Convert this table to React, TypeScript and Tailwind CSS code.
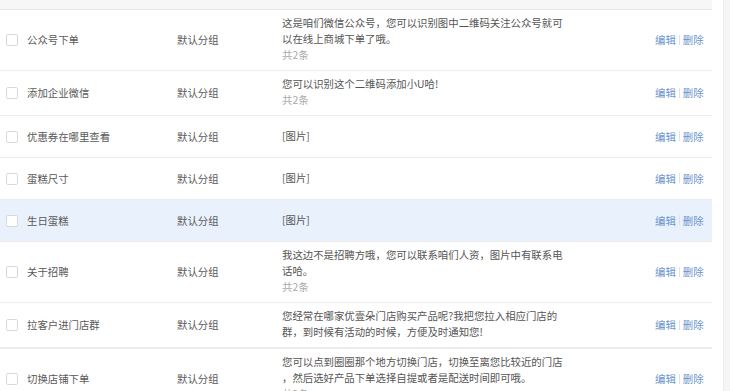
import React from "react"

type Row = {
  name: string
  group: string
  lines: string[]
  count?: string
  active?: boolean
  thick?: boolean
}

const rows: Row[] = [
  {
    name: "公众号下单",
    group: "默认分组",
    lines: ["这是咱们微信公众号，您可以识别图中二维码关注公众号就可", "以在线上商城下单了哦。"],
    count: "共2条",
  },
  {
    name: "添加企业微信",
    group: "默认分组",
    lines: ["您可以识别这个二维码添加小U哈!"],
    count: "共2条",
  },
  { name: "优惠券在哪里查看", group: "默认分组", lines: ["[图片]"] },
  { name: "蛋糕尺寸", group: "默认分组", lines: ["[图片]"] },
  { name: "生日蛋糕", group: "默认分组", lines: ["[图片]"], active: true },
  {
    name: "关于招聘",
    group: "默认分组",
    lines: ["我这边不是招聘方哦，您可以联系咱们人资，图片中有联系电", "话哈。"],
    count: "共2条",
  },
  {
    name: "拉客户进门店群",
    group: "默认分组",
    lines: ["您经常在哪家优壹朵门店购买产品呢?我把您拉入相应门店的", "群，到时候有活动的时候，方便及时通知您!"],
    thick: true,
  },
  {
    name: "切换店铺下单",
    group: "默认分组",
    lines: ["您可以点到圈圈那个地方切换门店，切换至离您比较近的门店", "，然后选好产品下单选择自提或者是配送时间即可哦。"],
    count: "共2条",
  },
]

function Checkbox() {
  return <span className="block w-[12px] h-[12px] border border-[#d9d9d9] rounded-[2px] bg-white" />
}

function TableRow({ row }: { row: Row }) {
  return (
    <div
      className={`flex items-center min-h-[42px] border-[#ececec] ${row.thick ? "border-b-2" : "border-b"} ${
        row.active ? "bg-[#e9f1fd]" : "bg-white"
      }`}
    >
      <div className="w-[27px] pl-[6px] shrink-0">
        <Checkbox />
      </div>
      <div className="w-[150px] shrink-0 text-[#5a5a5a]">{row.name}</div>
      <div className="w-[105px] shrink-0 text-[#5a5a5a]">{row.group}</div>
      <div className="w-[373px] shrink-0 pt-[5px] pb-[7px] leading-[16px] text-[#555]">
        {row.lines.map((l, i) => (
          <div key={i} className="whitespace-nowrap">
            {l}
          </div>
        ))}
        {row.count && <div className="text-[#aaa]">{row.count}</div>}
      </div>
      <div className="flex items-center text-[#6d94cc] whitespace-nowrap">
        <span>编辑</span>
        <span className="w-px h-[10px] bg-[#dde3ec] mx-[3px]" />
        <span>删除</span>
      </div>
    </div>
  )
}

export default function App() {
  return (
    <div
      className="flex w-[730px] h-[391px] overflow-hidden bg-white text-[10.4px]"
      style={{ fontFamily: '"Noto Sans CJK SC", "Noto Sans", sans-serif' }}
    >
      <div className="w-[712px] shrink-0">
        <div className="h-[10px] bg-[#f7f7f7] border-b border-[#e6e6e6]" />
        {rows.map((r, i) => (
          <TableRow key={i} row={r} />
        ))}
      </div>
      <div className="w-[11px] shrink-0" />
      <div className="flex-1 bg-[#f5f5f5] border-l border-[#ececec]" />
    </div>
  )
}
